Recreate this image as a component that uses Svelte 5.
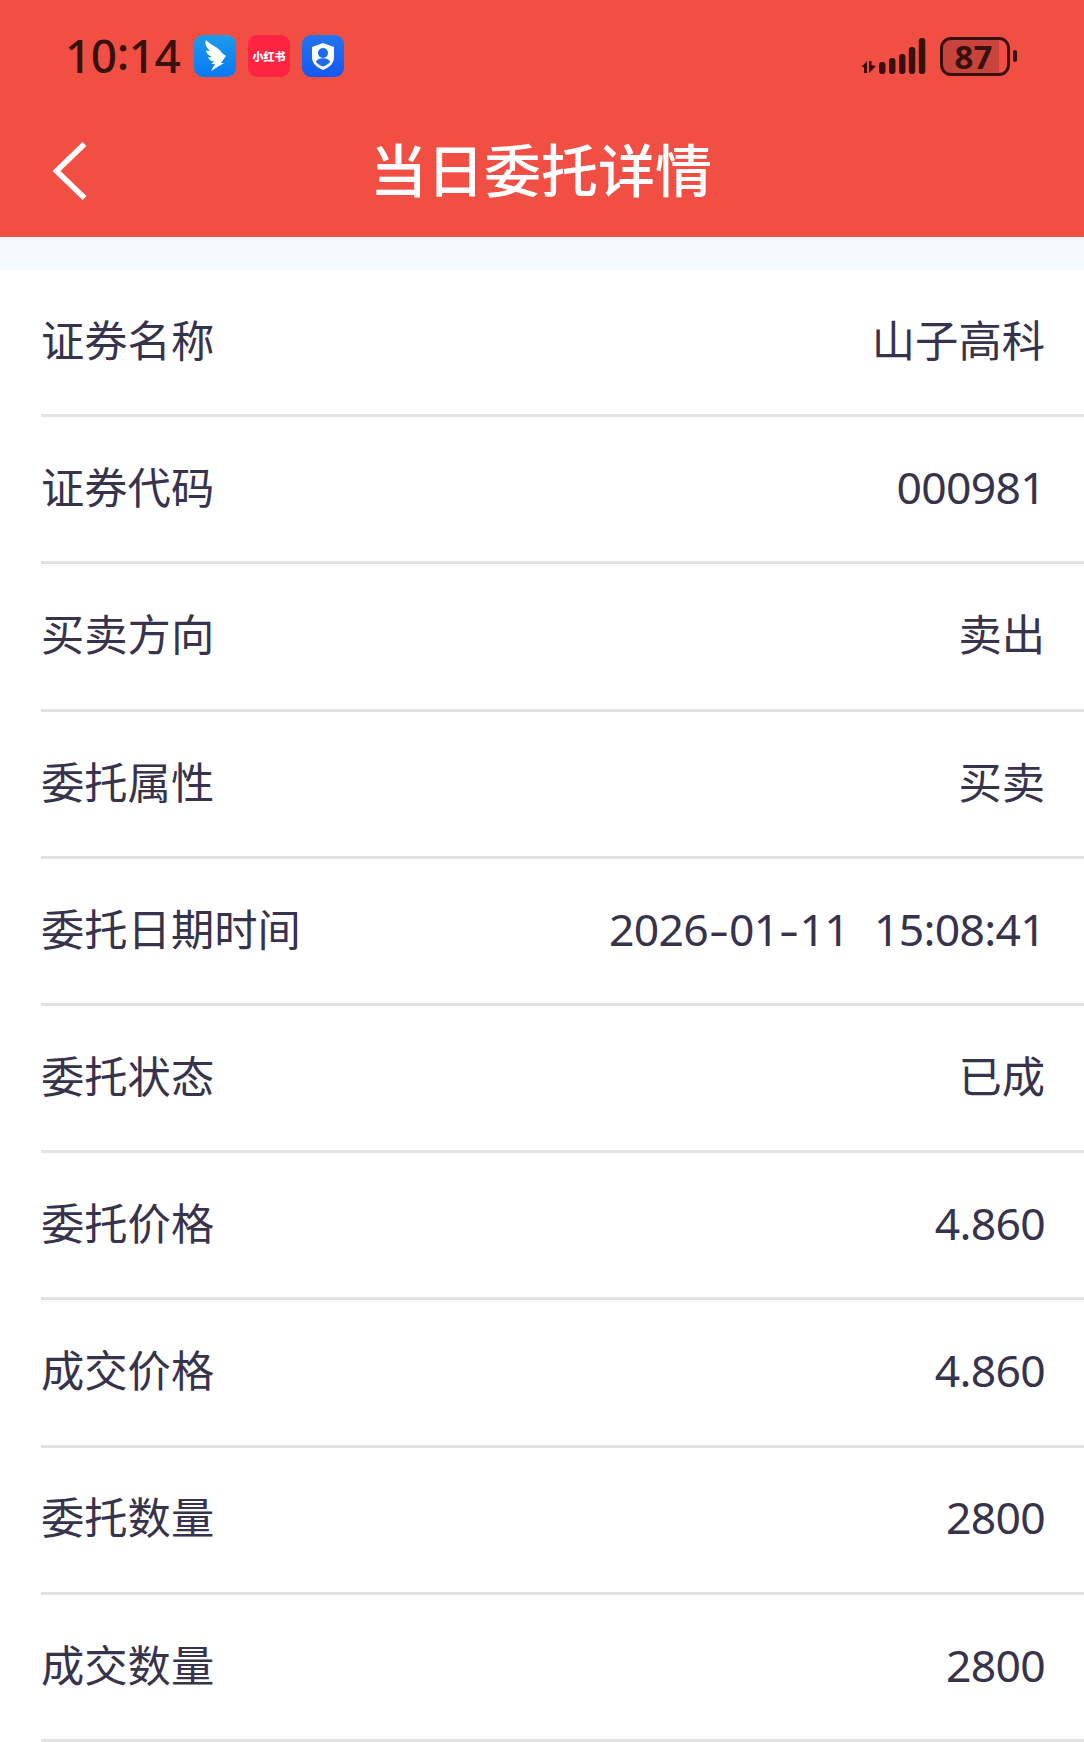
<script>
	const rows = [
		{ label: '证券名称', value: '山子高科' },
		{ label: '证券代码', value: '000981', num: true },
		{ label: '买卖方向', value: '卖出' },
		{ label: '委托属性', value: '买卖' },
		{ label: '委托日期时间', date: '2026-01-11', time: '15:08:41' },
		{ label: '委托状态', value: '已成' },
		{ label: '委托价格', value: '4.860', num: true },
		{ label: '成交价格', value: '4.860', num: true },
		{ label: '委托数量', value: '2800', num: true },
		{ label: '成交数量', value: '2800', num: true }
	];
</script>

<header>
	<div class="status">
		<span class="clock">10<b>:</b>14</span>
		<svg class="app" viewBox="0 0 42 42">
			<defs>
				<linearGradient id="wing" x1="0" y1="0" x2="0" y2="1">
					<stop offset="0" stop-color="#1c9bea" />
					<stop offset="1" stop-color="#0878f5" />
				</linearGradient>
			</defs>
			<rect width="42" height="42" rx="9" fill="url(#wing)" />
			<path
				d="M12 5C16 10 25 12 28 18L32 21L27 28L30 28L17 36L21 29L17 29L20 26.5C17 26 15 25 14 22.5L18 22C14 20 12 18 12 15.5L16 16C13 13 10 9 12 5Z"
				fill="#fff"
			/>
		</svg>
		<span class="app red">小红书</span>
		<svg class="app" viewBox="0 0 42 42">
			<defs>
				<linearGradient id="shield" x1="0" y1="0" x2="0" y2="1">
					<stop offset="0" stop-color="#2276ed" />
					<stop offset="1" stop-color="#1458f0" />
				</linearGradient>
			</defs>
			<rect width="42" height="42" rx="9" fill="url(#shield)" />
			<path d="M21 8L32 12V22C32 28 28 32 21 35C14 32 10 28 10 22V12Z" fill="#fff" />
			<circle cx="21" cy="18" r="5" fill="#1e69ed" />
			<path d="M14 27C15 22 27 22 28 27C26 29.5 24 30.5 21 31.5C18 30.5 16 29.5 14 27Z" fill="#1e69ed" />
		</svg>

		<svg class="signal" viewBox="0 0 64 38">
			<g fill="#37110e">
				<path d="M-0.5 30L5 24V36H2V30ZM7 24H9.5V28L14 29L7 36Z" />
				<rect x="17" y="25" width="6.5" height="12" rx="3" />
				<rect x="27" y="21" width="6.5" height="16" rx="3" />
				<rect x="37" y="17" width="6.5" height="20" rx="3" />
				<rect x="46.8" y="10" width="6.5" height="27" rx="3" />
				<rect x="56.8" y="1" width="6.5" height="36" rx="3" />
			</g>
		</svg>
		<div class="battery"><span>87</span></div>
		<i class="tip"></i>
	</div>

	<nav>
		<svg class="back" viewBox="0 0 34 60">
			<path d="M31.5 3L3.5 30L31.5 57" fill="none" stroke="#fff" stroke-width="5.5" />
		</svg>
		<h1>当日委托详情</h1>
	</nav>
</header>

<main>
	{#each rows as row}
		<div class="row">
			<span class="label">{row.label}</span>
			{#if row.date}
				<span class="value num">
					<span>
						{#each row.date.split('') as c}<span class:dash={c === '-'}>{c}</span>{/each}
					</span>
					<span>{row.time}</span>
				</span>
			{:else}
				<span class="value" class:num={row.num}>{row.value}</span>
			{/if}
		</div>
	{/each}
</main>

<style>
	:global(body) {
		margin: 0;
		background: #fff;
		font-family: 'Noto Sans CJK SC', sans-serif;
	}

	:global(#app) {
		height: 1742px;
		overflow: hidden;
	}

	header {
		height: 237px;
		background: #f24f44;
	}

	.status {
		display: flex;
		align-items: center;
		height: 104px;
		padding: 8px 67px 0 65px;
		box-sizing: border-box;
	}

	.clock {
		width: 129px;
		padding-bottom: 2px;
		font: 500 46px/1 'Noto Sans', sans-serif;
		letter-spacing: -0.5px;
		color: #37110e;
	}

	.clock b {
		display: inline-block;
		font-weight: 500;
		transform: translateY(-3px);
	}

	.app {
		flex: none;
		width: 42px;
		height: 42px;
		margin-right: 12px;
	}

	.red {
		display: flex;
		align-items: center;
		justify-content: center;
		border-radius: 9px;
		background: #ff2442;
		color: #fff;
		font-size: 11px;
		font-weight: 900;
		line-height: 1;
	}

	.signal {
		width: 64px;
		height: 38px;
		margin: 0 14px 0 auto;
		overflow: visible;
	}

	.battery {
		display: flex;
		align-items: center;
		justify-content: center;
		width: 70px;
		height: 39px;
		box-sizing: border-box;
		border: 3px solid #37110e;
		border-radius: 11px;
		background: linear-gradient(90deg, #c8433c 88%, #f24f44 88%);
		font: 700 33px/1 'Noto Sans', sans-serif;
		color: #37110e;
	}

	.battery span {
		padding: 1px 3px 0 0;
	}

	.tip {
		width: 4px;
		height: 12px;
		margin-left: 3px;
		border-radius: 2px;
		background: #37110e;
	}

	nav {
		display: grid;
		grid-template-columns: 90px 1fr 90px;
		align-items: center;
		height: 133px;
	}

	.back {
		width: 34px;
		height: 60px;
		margin-left: 53px;
	}

	h1 {
		margin: 0;
		padding: 0 2px 6px 0;
		font-size: 57px;
		font-weight: 500;
		line-height: 1;
		text-align: center;
		color: #fff;
	}

	main {
		border-top: 33px solid #f5faff;
	}

	.row {
		display: flex;
		align-items: center;
		justify-content: space-between;
		height: 147.2px;
		margin-left: 41px;
		padding: 0 39px 7px 0;
		box-sizing: border-box;
		border-bottom: 3px solid #e2e2e4;
		font-size: 43.3px;
		line-height: 1;
		color: #37334d;
	}

	.num {
		display: flex;
		gap: 25px;
		padding-top: 3px;
		font-family: 'Noto Sans', sans-serif;
		font-size: 44.5px;
		letter-spacing: -0.7px;
	}

	.dash {
		display: inline-block;
		width: 21px;
		text-align: center;
		transform: scaleX(1.4);
	}
</style>
